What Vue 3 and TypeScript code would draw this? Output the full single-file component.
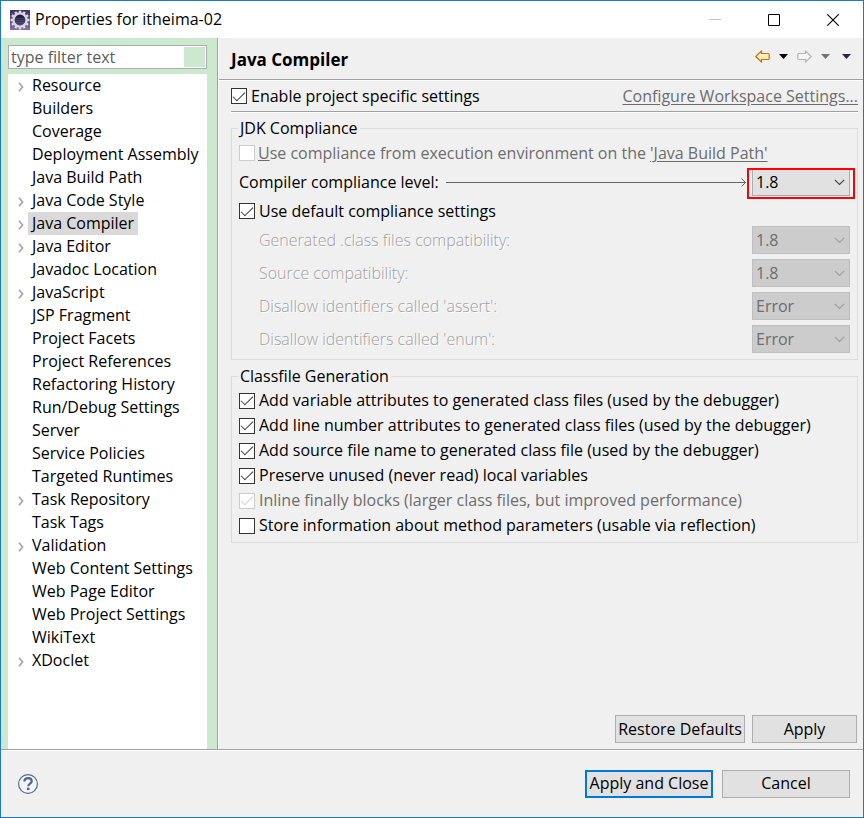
<script setup lang="ts">
import { ref } from 'vue'

interface TreeNode {
  label: string
  expandable?: boolean
}

interface Setting {
  id: string
  label: string
  value: string
  options: string[]
}

interface Toggle {
  id: string
  label: string
  checked: boolean
  disabled?: boolean
}

const filter = ref('')
const selected = ref('Java Compiler')
const projectSpecific = ref(true)
const useEnvironment = ref(false)
const useDefaults = ref(true)
const level = ref('1.8')

const nodes: TreeNode[] = [
  { label: 'Resource', expandable: true },
  { label: 'Builders' },
  { label: 'Coverage' },
  { label: 'Deployment Assembly' },
  { label: 'Java Build Path' },
  { label: 'Java Code Style', expandable: true },
  { label: 'Java Compiler', expandable: true },
  { label: 'Java Editor', expandable: true },
  { label: 'Javadoc Location' },
  { label: 'JavaScript', expandable: true },
  { label: 'JSP Fragment' },
  { label: 'Project Facets' },
  { label: 'Project References' },
  { label: 'Refactoring History' },
  { label: 'Run/Debug Settings' },
  { label: 'Server' },
  { label: 'Service Policies' },
  { label: 'Targeted Runtimes' },
  { label: 'Task Repository', expandable: true },
  { label: 'Task Tags' },
  { label: 'Validation', expandable: true },
  { label: 'Web Content Settings' },
  { label: 'Web Page Editor' },
  { label: 'Web Project Settings' },
  { label: 'WikiText' },
  { label: 'XDoclet', expandable: true },
]

const versions = ['1.8', '1.7', '1.6', '1.5']
const severities = ['Error', 'Warning', 'Ignore']

const settings = ref<Setting[]>([
  { id: 'class-compat', label: 'Generated .class files compatibility:', value: '1.8', options: versions },
  { id: 'source-compat', label: 'Source compatibility:', value: '1.8', options: versions },
  { id: 'assert-id', label: "Disallow identifiers called 'assert':", value: 'Error', options: severities },
  { id: 'enum-id', label: "Disallow identifiers called 'enum':", value: 'Error', options: severities },
])

const toggles = ref<Toggle[]>([
  { id: 'variables', label: 'Add variable attributes to generated class files (used by the debugger)', checked: true },
  { id: 'lines', label: 'Add line number attributes to generated class files (used by the debugger)', checked: true },
  { id: 'source', label: 'Add source file name to generated class file (used by the debugger)', checked: true },
  { id: 'unused', label: 'Preserve unused (never read) local variables', checked: true },
  { id: 'inline', label: 'Inline finally blocks (larger class files, but improved performance)', checked: true, disabled: true },
  { id: 'params', label: 'Store information about method parameters (usable via reflection)', checked: false },
])

const teeth = Array.from({ length: 12 }, (_, i) => i * 30)
</script>

<template>
  <div class="window">
    <header class="titlebar">
      <svg class="app-icon" width="20" height="20" viewBox="0 0 20 20" aria-hidden="true">
        <defs>
          <linearGradient id="iconBg" x1="0" y1="0" x2="0" y2="1">
            <stop offset="0" stop-color="#3c3264" />
            <stop offset="1" stop-color="#8a6ba8" />
          </linearGradient>
          <linearGradient id="iconCore" x1="0" y1="0" x2="0" y2="1">
            <stop offset="0" stop-color="#17122e" />
            <stop offset="1" stop-color="#54487c" />
          </linearGradient>
        </defs>
        <rect width="20" height="20" fill="url(#iconBg)" />
        <g fill="#dedde3">
          <rect v-for="t in teeth" :key="t" x="8.8" y=".6" width="2.4" height="4" :transform="`rotate(${t} 10 10)`" />
        </g>
        <circle cx="10" cy="10" r="6.6" fill="url(#iconCore)" stroke="#d8d6dd" stroke-width="2.400" />
        <path d="M5 8.500h10M4.600 10.500h10.800M5 12.500h10" stroke="#6a5f8c" stroke-width=".4" />
      </svg>
      <h1>Properties for itheima-02</h1>
      <button class="caption" type="button" aria-label="Minimize" disabled>
        <svg width="12" height="12" viewBox="0 0 12 12"><path d="M0 5.500h12" stroke="#c4c4c4" /></svg>
      </button>
      <button class="caption" type="button" aria-label="Maximize">
        <svg width="12" height="12" viewBox="0 0 12 12"><path d="M.5.5h11v11H.5z" fill="none" stroke="#000" /></svg>
      </button>
      <button class="caption" type="button" aria-label="Close">
        <svg width="12" height="12" viewBox="0 0 12 12"><path d="M.3.3l11.400 11.400M11.700.3L.3 11.700" stroke="#000" stroke-width="1.100" /></svg>
      </button>
    </header>

    <div class="body">
      <nav class="sidebar">
        <div class="filter">
          <input v-model="filter" type="text" placeholder="type filter text" aria-label="type filter text" />
          <span class="clear"></span>
        </div>
        <ul class="tree">
          <li v-for="node in nodes" :key="node.label">
            <button v-if="node.expandable" class="twisty" type="button" :aria-label="`Expand ${node.label}`">
              <svg width="6" height="10" viewBox="0 0 6 10"><path d="M1 .7L4.600 5 1 9.300" fill="none" stroke="#a6a6a6" stroke-width="1.700" /></svg>
            </button>
            <span v-else class="twisty"></span>
            <button class="node" :class="{ active: node.label === selected }" type="button" @click="selected = node.label">
              {{ node.label }}
            </button>
          </li>
        </ul>
      </nav>

      <main class="page">
        <div class="page-head">
          <h2>Java Compiler</h2>
          <div class="history">
            <button type="button" class="tool" aria-label="Back">
              <svg width="15" height="13" viewBox="0 0 15 13">
                <defs><linearGradient id="gold" x1="0" y1="0" x2="0" y2="1"><stop offset="0" stop-color="#fffbe0" /><stop offset="1" stop-color="#ffe08a" /></linearGradient></defs>
                <path d="M.8 6.500L6.500.8V3.500H13.300Q14.200 3.500 14.200 4.400V8.600Q14.200 9.500 13.300 9.500H6.500V12.200Z" fill="url(#gold)" stroke="#b8761c" stroke-width="1.200" stroke-linejoin="round" />
              </svg>
            </button>
            <button type="button" class="tool caret" aria-label="Back menu">
              <svg width="9" height="5" viewBox="0 0 9 5"><path d="M0 0h9L4.500 5z" fill="#000" /></svg>
            </button>
            <button type="button" class="tool" aria-label="Forward" disabled>
              <svg width="15" height="13" viewBox="0 0 15 13">
                <path d="M14.200 6.500L8.500.8V3.500H1.700Q.8 3.500.8 4.400V8.600Q.8 9.500 1.700 9.500H8.500V12.200Z" fill="#f6f6f6" stroke="#b4b4b4" stroke-width="1.200" stroke-linejoin="round" />
              </svg>
            </button>
            <button type="button" class="tool caret" aria-label="Forward menu" disabled>
              <svg width="9" height="5" viewBox="0 0 9 5"><path d="M0 0h9L4.500 5z" fill="#727272" /></svg>
            </button>
            <button type="button" class="tool view" aria-label="View menu">
              <svg width="9" height="5" viewBox="0 0 9 5"><path d="M0 0h9L4.500 5z" fill="#32204e" /></svg>
            </button>
          </div>
        </div>

        <div class="content">
          <div class="enable">
            <label class="check">
              <input v-model="projectSpecific" type="checkbox" />
              <span>Enable project specific settings</span>
            </label>
            <a href="#" class="muted">Configure Workspace Settings...</a>
          </div>

          <fieldset class="compliance">
            <legend>JDK Compliance</legend>
            <div class="row tight">
              <input id="use-env" v-model="useEnvironment" type="checkbox" disabled />
              <span class="muted"><label for="use-env"><u>U</u>se compliance from execution environment on the </label><a href="#" class="muted">'Java Build Path'</a></span>
            </div>
            <div class="row level">
              <label for="level">Compiler compliance level:</label>
              <span class="pointer">
                <svg width="5" height="9" viewBox="0 0 5 9" aria-hidden="true"><path d="M.5.5l4 4-4 4" fill="none" stroke="#646464" /></svg>
              </span>
              <span class="select marked">
                <select id="level" v-model="level">
                  <option v-for="v in versions" :key="v">{{ v }}</option>
                </select>
                <svg width="11" height="7" viewBox="0 0 11 7" aria-hidden="true"><path d="M.8.8l4.700 4.700L10.200.8" /></svg>
              </span>
            </div>
            <div class="row">
              <label class="check">
                <input v-model="useDefaults" type="checkbox" />
                <span>Use default compliance settings</span>
              </label>
            </div>
            <div class="details">
              <div v-for="s in settings" :key="s.id" class="detail">
                <label :for="s.id">{{ s.label }}</label>
                <span class="select">
                  <select :id="s.id" v-model="s.value" :disabled="useDefaults">
                    <option v-for="o in s.options" :key="o">{{ o }}</option>
                  </select>
                  <svg width="11" height="7" viewBox="0 0 11 7" aria-hidden="true"><path d="M.8.8l4.700 4.700L10.200.8" /></svg>
                </span>
              </div>
            </div>
          </fieldset>

          <fieldset class="generation">
            <legend>Classfile Generation</legend>
            <label v-for="t in toggles" :key="t.id" class="check" :class="{ muted: t.disabled }">
              <input v-model="t.checked" type="checkbox" :disabled="t.disabled" />
              <span>{{ t.label }}</span>
            </label>
          </fieldset>

          <div class="page-actions">
            <button class="btn restore" type="button">Restore Defaults</button>
            <button class="btn apply" type="button">Apply</button>
          </div>
        </div>
      </main>
    </div>

    <footer class="footer">
      <button class="help" type="button" aria-label="Help">
        <svg width="20" height="20" viewBox="0 0 20 20">
          <circle cx="10" cy="10" r="9.400" fill="#f3f5f8" stroke="#5b6b8c" stroke-width="1.200" />
          <path d="M6.400 7.600C6.400 5.200 8 4.200 10 4.200c2.200 0 3.700 1.200 3.700 3 0 2.500-3.400 2.500-3.400 5" fill="none" stroke="#53658a" stroke-width="2.200" />
          <rect x="9" y="13.700" width="2.500" height="2.400" fill="#53658a" />
        </svg>
      </button>
      <button class="btn wide primary" type="button">Apply and Close</button>
      <button class="btn wide" type="button">Cancel</button>
    </footer>
  </div>
</template>

<style>
body {
  margin: 0;
  background: #f0f0f0;
}
</style>

<style scoped>
.window,
.window * {
  box-sizing: border-box;
}

.window {
  display: flex;
  flex-direction: column;
  min-height: 100vh;
  border: 1px solid #1979ca;
  background: #f0f0f0;
  color: #000;
  font-family: "Open Sans", "Noto Sans", sans-serif;
  font-size: 16px;
  line-height: 21px;
  white-space: nowrap;
}

button,
input,
select {
  margin: 0;
  padding: 0;
  border: 0;
  border-radius: 0;
  background: none;
  color: inherit;
  font: inherit;
}

svg {
  display: block;
}

.titlebar {
  display: flex;
  align-items: center;
  height: 37px;
  padding: 0 1px 0 9px;
  background: #fff;
}

.titlebar h1 {
  flex: 1;
  margin: 0 0 0 5px;
  font-size: 16px;
  font-weight: 400;
}

.caption {
  display: grid;
  place-items: center;
  width: 59px;
  height: 37px;
}

.body {
  display: flex;
  flex: 1;
}

.sidebar {
  display: flex;
  flex-direction: column;
  flex: none;
  gap: 5px;
  width: 217px;
  padding: 7px 10px 0 7px;
  border-right: 1px solid #a0a0a0;
  background: #cce8cf;
}

.filter {
  display: flex;
  height: 24px;
  padding: 1px;
  border: 1px solid #abadb3;
  background: #fff;
}

.filter input {
  flex: 1;
  min-width: 0;
  padding-left: 1px;
  outline: none;
}

.filter input::placeholder {
  color: #5c5c5c;
  opacity: 1;
}

.clear {
  width: 21px;
  background: #cce8cf;
}

.tree {
  flex: 1;
  margin: 0;
  padding: 0;
  background: #fff;
  list-style: none;
}

.tree li {
  display: flex;
  height: 23px;
}

.twisty {
  display: grid;
  place-items: center;
  width: 20px;
  padding: 3px 0 0 5px;
}

.node {
  padding: 0 4px;
}

.node.active {
  background: #d9d9d9;
}

.page {
  display: flex;
  flex: 1;
  flex-direction: column;
  min-width: 0;
  border-left: 1px solid #fff;
}

.page-head {
  display: flex;
  align-items: center;
  justify-content: space-between;
  height: 43px;
  padding: 0 12px 0 12px;
  border-bottom: 1px solid #fff;
  box-shadow: inset 0 -1px #a0a0a0;
}

.page-head h2 {
  margin: 0;
  padding-top: 1px;
  font-size: 17px;
  font-weight: 700;
}

.history {
  display: flex;
  align-items: center;
  gap: 9px;
  padding-bottom: 6px;
}

.tool.view {
  margin-left: 3px;
}

.content {
  display: flex;
  flex: 1;
  flex-direction: column;
  padding: 0 5px 6px 12px;
}

.enable {
  display: flex;
  align-items: center;
  justify-content: space-between;
  height: 32px;
  margin-bottom: 5px;
  padding-bottom: 1px;
  border-bottom: 1px solid #fff;
  box-shadow: inset 0 -1px #a0a0a0;
}

.muted {
  color: #6d6d6d;
}

a {
  text-underline-offset: 2px;
}

.check {
  display: flex;
  align-items: center;
  gap: 4px;
}

input[type="checkbox"] {
  display: grid;
  place-items: center;
  flex: none;
  width: 16px;
  height: 16px;
  border: 1px solid #333;
  background: #fff;
  appearance: none;
}

input[type="checkbox"]:checked::before {
  content: "";
  width: 11px;
  height: 5px;
  margin-bottom: 3px;
  border: solid #333;
  border-width: 0 0 1px 1px;
  transform: rotate(-45deg);
}

input[type="checkbox"]:disabled {
  border-color: #ccc;
}

input[type="checkbox"]:checked:disabled::before {
  border-color: #ccc;
}

fieldset {
  min-width: 0;
  margin: 0;
  border: 1px solid #dcdcdc;
}

legend {
  height: 21px;
  margin-left: -1px;
  padding: 0 2px;
}

.compliance {
  margin-bottom: 6px;
  padding: 0 7px 6px;
}

.row {
  display: flex;
  align-items: center;
  height: 28px;
}

.row.level {
  height: 30px;
}

.tight {
  gap: 3px;
}

.tight label {
  white-space: pre;
}

.pointer {
  display: flex;
  flex: 1;
  align-items: center;
  margin: 0 6px 0 7px;
}

.pointer::before {
  content: "";
  flex: 1;
  height: 1px;
  margin-right: -4px;
  background: #646464;
}

.select {
  position: relative;
  display: grid;
  grid-template-columns: 1fr 16px;
  align-items: center;
  width: 98px;
  height: 28px;
}

.select select {
  grid-area: 1 / 1 / 2 / 3;
  height: 28px;
  padding-left: 3px;
  border: 1px solid #adadad;
  background: #e1e1e1;
  appearance: none;
}

.select svg {
  grid-area: 1 / 2;
  pointer-events: none;
  fill: none;
  stroke: #444;
  stroke-width: 1.2;
}

.select select:disabled {
  border-color: #bfbfbf;
  background: #ccc;
  color: #6d6d6d;
  opacity: 1;
}

.select select:disabled + svg {
  stroke: #a0a0a0;
}

.detail .select {
  margin-left: auto;
}

.marked::after {
  content: "";
  position: absolute;
  inset: 0 -5px -3px;
  border: 2px solid #f00;
  pointer-events: none;
}

.details {
  display: grid;
  gap: 5px;
  padding: 1px 0 0 20px;
}

.detail {
  display: flex;
  align-items: center;
}

.detail label {
  color: #a0a0a0;
  font-weight: 300;
  text-shadow: 1px 1px #fff;
}

.generation {
  padding: 1px 7px 4px;
}

.generation .check {
  height: 25px;
}

.page-actions {
  display: flex;
  justify-content: flex-end;
  gap: 7px;
  margin-top: auto;
  padding-right: 1px;
}

.btn {
  height: 28px;
  border: 1px solid #adadad;
  background: #e1e1e1;
}

.restore {
  width: 130px;
}

.apply {
  width: 105px;
}

.wide {
  width: 128px;
}

.primary {
  border: 2px solid #0078d7;
}

.footer {
  display: flex;
  align-items: center;
  gap: 9px;
  height: 68px;
  padding: 0 13px 0 17px;
  border-top: 1px solid #a0a0a0;
  box-shadow: inset 0 1px #fff;
}

.help {
  margin-right: auto;
}
</style>
